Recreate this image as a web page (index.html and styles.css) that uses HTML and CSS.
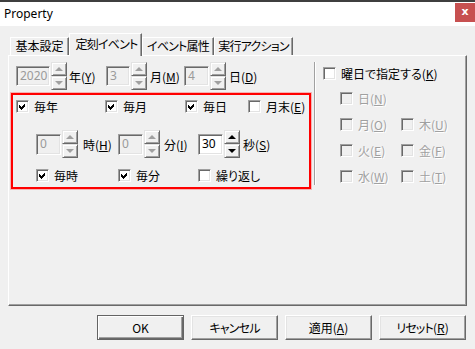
FILE: index.html
```html
<!DOCTYPE html>
<html lang="ja">
<head>
<meta charset="utf-8">
<title>Property</title>
<link rel="stylesheet" href="styles.css">
</head>
<body>
<div class="window">
  <div class="titlebar">
    <span class="title">Property</span>
    <span class="close">x</span>
  </div>
  <div class="client">
    <div class="tabs">
      <div class="tab tab-1">基本設定</div>
      <div class="tab tab-2 active"><span class="kana">定刻イベント</span></div>
      <div class="tab tab-3"><span class="kana">イベント属性</span></div>
      <div class="tab tab-4"><span class="kana">実行アクション</span></div>
    </div>
    <div class="panel">
      <div class="left">
        <div class="row row-date">
          <div class="field disabled w34">2020</div>
          <div class="spin disabled"><span class="sb up"></span><span class="sb down"></span></div>
          <span class="lbl ld1">年(<u>Y</u>)</span>
          <div class="field disabled w24">3</div>
          <div class="spin disabled"><span class="sb up"></span><span class="sb down"></span></div>
          <span class="lbl ld2">月(<u>M</u>)</span>
          <div class="field disabled w25">4</div>
          <div class="spin disabled"><span class="sb up"></span><span class="sb down"></span></div>
          <span class="lbl ld3">日(<u>D</u>)</span>
        </div>
        <div class="redbox">
          <div class="row row-a">
            <label class="cb-item wa1"><span class="cb checked"><svg viewBox="0 0 9 9" width="9" height="9"><polygon points="1,3 3,5 7,1 7,4 3,8 1,6"/></svg></span>毎年</label>
            <label class="cb-item wa2"><span class="cb checked"><svg viewBox="0 0 9 9" width="9" height="9"><polygon points="1,3 3,5 7,1 7,4 3,8 1,6"/></svg></span>毎月</label>
            <label class="cb-item wa3"><span class="cb checked"><svg viewBox="0 0 9 9" width="9" height="9"><polygon points="1,3 3,5 7,1 7,4 3,8 1,6"/></svg></span>毎日</label>
            <label class="cb-item"><span class="cb"></span>月末(<u>E</u>)</label>
          </div>
          <div class="row row-b">
            <div class="field disabled w25 tall">0</div>
            <div class="spin disabled"><span class="sb up"></span><span class="sb down"></span></div>
            <span class="lbl lt1">時(<u>H</u>)</span>
            <div class="field disabled w25 tall">0</div>
            <div class="spin disabled"><span class="sb up"></span><span class="sb down"></span></div>
            <span class="lbl lt2">分(<u>I</u>)</span>
            <div class="field w25 tall">30</div>
            <div class="spin"><span class="sb up"></span><span class="sb down"></span></div>
            <span class="lbl lt3">秒(<u>S</u>)</span>
          </div>
          <div class="row row-c">
            <label class="cb-item wc1"><span class="cb checked"><svg viewBox="0 0 9 9" width="9" height="9"><polygon points="1,3 3,5 7,1 7,4 3,8 1,6"/></svg></span>毎時</label>
            <label class="cb-item wc2"><span class="cb checked"><svg viewBox="0 0 9 9" width="9" height="9"><polygon points="1,3 3,5 7,1 7,4 3,8 1,6"/></svg></span>毎分</label>
            <label class="cb-item"><span class="cb"></span>繰り返し</label>
          </div>
        </div>
      </div>
      <div class="sep"></div>
      <div class="right">
        <label class="cb-item"><span class="cb"></span>曜日で指定する(<u>K</u>)</label>
        <div class="week">
          <label class="cb-item off wk"><span class="cb"></span>日(<u>N</u>)</label>
          <span></span>
          <label class="cb-item off wk"><span class="cb"></span>月(<u>O</u>)</label>
          <label class="cb-item off wk"><span class="cb"></span>木(<u>U</u>)</label>
          <label class="cb-item off wk"><span class="cb"></span>火(<u>E</u>)</label>
          <label class="cb-item off wk"><span class="cb"></span>金(<u>F</u>)</label>
          <label class="cb-item off wk"><span class="cb"></span>水(<u>W</u>)</label>
          <label class="cb-item off wk"><span class="cb"></span>土(<u>T</u>)</label>
        </div>
      </div>
    </div>
    <div class="buttons">
      <button class="btn default">OK</button>
      <button class="btn"><span class="kana">キャンセル</span></button>
      <button class="btn">適用(<u>A</u>)</button>
      <button class="btn"><span class="kana">リセット</span>(<u>R</u>)</button>
    </div>
  </div>
</div>
</body>
</html>
```
FILE: styles.css
```css
html, body {
  margin: 0;
  padding: 0;
}
body {
  width: 475px;
  height: 349px;
  overflow: hidden;
  background: #f0f0f0;
  font-family: "Noto Sans CJK JP", "Noto Sans", sans-serif;
  font-size: 12px;
  font-feature-settings: "palt";
  color: #000;
}
u { text-decoration: underline; text-underline-offset: 1px; }
.kana { letter-spacing: -0.8px; }

.titlebar {
  height: 24px;
  border-top: 2px solid #3f3f3f;
  background: #fff;
  display: flex;
  justify-content: space-between;
  align-items: flex-start;
}
.title {
  font-family: "Noto Sans", "Open Sans", sans-serif;
  font-size: 12px;
  line-height: 24px;
  padding-left: 4px;
}
.close {
  width: 20px;
  height: 19px;
  margin-top: 1px;
  background: #c75050;
  color: #fff;
  font-family: "DejaVu Sans", sans-serif;
  font-weight: bold;
  font-size: 11px;
  line-height: 17px;
  text-align: center;
}

.client {
  padding: 7px 8px 0 8px;
}

/* tabs */
.tabs {
  display: flex;
  align-items: flex-end;
  height: 22px;
  padding-left: 2px;
  position: relative;
  z-index: 1;
}
.tab {
  box-sizing: border-box;
  height: 18px;
  border: 1px solid;
  border-bottom: none;
  border-color: #fff #696969 transparent #fff;
  box-shadow: inset -1px 0 #a0a0a0;
  text-align: center;
  line-height: 16px;
  white-space: nowrap;
  background: #f0f0f0;
}
.tab-1 { width: 59px; }
.tab-2 { width: 73px; }
.tab-3 { width: 72px; }
.tab-4 { width: 79px; }
.tab.active {
  height: 23px;
  margin-bottom: -1px;
  line-height: 20px;
  padding-left: 2px;
}

/* panel */
.panel {
  box-sizing: border-box;
  width: 459px;
  height: 251px;
  border: 1px solid;
  border-color: #fff #696969 #696969 #fff;
  box-shadow: inset -1px -1px #a0a0a0;
  display: flex;
  align-items: flex-start;
  padding-top: 6px;
}
.left {
  margin-left: 2px;
  width: 300px;
}
.row {
  display: flex;
  align-items: center;
}
.row-date {
  height: 28px;
  padding-left: 5px;
}

/* edit fields */
.field {
  box-sizing: border-box;
  height: 20px;
  border: 1px solid;
  border-color: #a0a0a0 #fff #fff #a0a0a0;
  box-shadow: inset 1px 1px #696969, inset -1px -1px #e3e3e3;
  background: #fff;
  padding-left: 3px;
  line-height: 17px;
  font-family: "Noto Sans", "Noto Sans CJK JP", sans-serif;
  font-size: 12px;
}
.field.tall { height: 21px; line-height: 18px; }
.field.disabled {
  background: #f0f0f0;
  color: #9a9a9a;
}
.w34 { width: 34px; }
.w24 { width: 24px; }
.w25 { width: 25px; }

/* spinner */
.spin {
  display: flex;
  flex-direction: column;
  width: 16px;
  height: 28px;
  margin-left: 1px;
}
.sb {
  box-sizing: border-box;
  height: 14px;
  border: 1px solid;
  border-color: #e3e3e3 #696969 #696969 #e3e3e3;
  box-shadow: inset 1px 1px #fff, inset -1px -1px #a0a0a0;
  background: #f0f0f0;
  display: flex;
  align-items: center;
  justify-content: center;
}
.sb::after {
  content: "";
  width: 0;
  height: 0;
  border-left: 4px solid transparent;
  border-right: 4px solid transparent;
}
.sb.up::after { border-bottom: 4px solid #000; margin-top: -1px; }
.sb.down::after { border-top: 4px solid #000; }
.spin.disabled .sb.up::after { border-bottom-color: #a0a0a0; }
.spin.disabled .sb.down::after { border-top-color: #a0a0a0; }

.lbl { white-space: nowrap; }
.ld1 { margin-left: 2px; width: 37px; }
.ld2 { margin-left: 3px; width: 34px; }
.ld3 { margin-left: 3px; }

/* red box */
.redbox {
  box-sizing: border-box;
  margin-top: 3px;
  height: 96px;
  border: 2px solid #ff0000;
  box-shadow: 0 0 0 1px rgba(255, 0, 0, 0.25);
}
.row-a {
  margin-top: 5px;
  height: 13px;
  padding-left: 3px;
}
.row-b {
  margin-top: 17px;
  height: 28px;
  padding-left: 23px;
}
.row-c {
  margin-top: 11px;
  height: 13px;
  padding-left: 23px;
}
.lt1 { margin-left: 5px; width: 35px; }
.lt2 { margin-left: 4px; width: 34px; }
.lt3 { margin-left: 3px; }

/* checkboxes */
.cb-item {
  display: flex;
  align-items: center;
  height: 13px;
  white-space: nowrap;
  line-height: 13px;
}
.cb {
  box-sizing: border-box;
  width: 13px;
  height: 13px;
  flex: none;
  border: 1px solid;
  border-color: #a0a0a0 #fff #fff #a0a0a0;
  box-shadow: inset 1px 1px #696969, inset -1px -1px #e3e3e3;
  background: #fff;
  margin-right: 5px;
  padding: 1px;
}
.cb svg { display: block; shape-rendering: crispEdges; }
.cb svg polygon { fill: #000; }
.wa1 { width: 89px; }
.wa2 { width: 80px; }
.wa3 { width: 63px; }
.wc1 { width: 82px; }
.wc2 { width: 80px; }

.cb-item.off { color: #a0a0a0; text-shadow: 1px 1px 0 #fff; }
.cb-item.off .cb { background: #f0f0f0; }

/* separator + right group */
.sep {
  box-sizing: border-box;
  margin-left: 3px;
  width: 2px;
  height: 123px;
  border-left: 1px solid #a0a0a0;
  border-right: 1px solid #fff;
}
.right {
  margin-left: 7px;
  margin-top: 5px;
}
.week {
  margin-top: 12px;
  margin-left: 17px;
  display: grid;
  grid-template-columns: 61px auto;
  row-gap: 13px;
}

/* buttons */
.buttons {
  display: flex;
  justify-content: flex-end;
  gap: 7px;
  margin-top: 9px;
  padding-right: 1px;
}
.btn {
  box-sizing: border-box;
  width: 87px;
  height: 25px;
  margin: 0;
  padding: 0;
  background: #f0f0f0;
  border: 1px solid;
  border-color: #fff #696969 #696969 #fff;
  box-shadow: inset -1px -1px #a0a0a0, inset 1px 1px #e3e3e3;
  font-family: "Noto Sans CJK JP", "Noto Sans", sans-serif;
  font-feature-settings: "palt";
  font-size: 12px;
  color: #000;
  line-height: 21px;
}
.btn.default {
  border: 1px solid #646464;
  box-shadow: inset 1px 1px #fff, inset -1px -1px #696969, inset -2px -2px #a0a0a0;
}
```
